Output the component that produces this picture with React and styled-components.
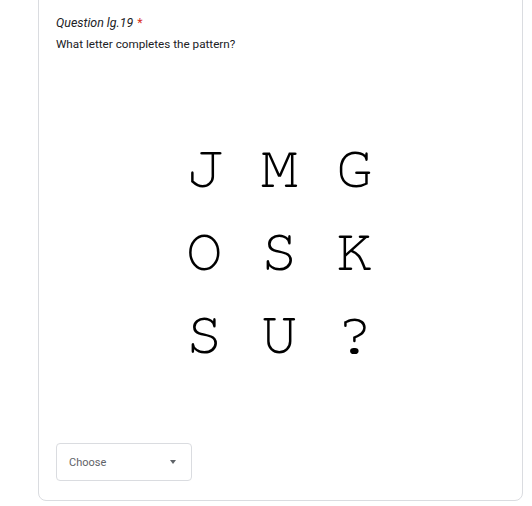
import React from "react";
import styled, { createGlobalStyle } from "styled-components";

const Global = createGlobalStyle`
  html, body { margin: 0; padding: 0; background: #ffffff; }
  body { font-family: Roboto, "Noto Sans", Arial, sans-serif; }
`;

const Page = styled.div`
  width: 532px;
  height: 506px;
  overflow: hidden;
  position: relative;
  box-sizing: border-box;
  padding: 0 9px 0 38px;
`;

const Card = styled.div`
  margin-top: -20px;
  height: 521px;
  box-sizing: border-box;
  border: 1px solid #dadce0;
  border-radius: 8px;
  background: #fff;
  padding: 33px 17px 0 17px;
  display: flex;
  flex-direction: column;
`;

const Title = styled.div`
  font-family: Roboto, Arial, sans-serif;
  font-style: italic;
  font-size: 12.4px;
  line-height: 18px;
  color: #202124;
`;

const Required = styled.span`
  color: #d93025;
  font-style: normal;
  margin-left: 4px;
`;

const Description = styled.div`
  margin-top: 4px;
  font-family: Roboto, Arial, sans-serif;
  font-size: 11.7px;
  line-height: 16px;
  color: #202124;
`;

const Puzzle = styled.div`
  margin: 75px 0 0 -17px;
  width: calc(100% + 34px);
  display: grid;
  grid-template-columns: repeat(3, 75px);
  justify-content: center;
  padding-left: 36px;
  box-sizing: border-box;
`;

const Cell = styled.div`
  font-family: "Nimbus Mono PS", "Nimbus Mono L", FreeMono, "Courier 10 Pitch", Courier, "Liberation Mono", monospace;
  font-size: 61px;
  line-height: 83px;
  height: 83px;
  color: #000;
  text-align: left;
`;

const Select = styled.div`
  margin-top: 67px;
  width: 136px;
  height: 38px;
  box-sizing: border-box;
  border: 1px solid #dadce0;
  border-radius: 4px;
  display: flex;
  align-items: center;
  justify-content: space-between;
  padding: 0 15px 0 12px;
`;

const Placeholder = styled.span`
  font-family: Roboto, Arial, sans-serif;
  font-size: 11px;
  color: #5f6368;
`;

const Caret = styled.span`
  width: 0;
  height: 0;
  border-left: 3.5px solid transparent;
  border-right: 3.5px solid transparent;
  border-top: 4px solid #5f6368;
`;

const rows = [
  ["J", "M", "G"],
  ["O", "S", "K"],
  ["S", "U", "?"],
];

export default function App() {
  return (
    <>
      <Global />
      <Page>
        <Card>
          <Title>
            Question lg.19<Required>*</Required>
          </Title>
          <Description>What letter completes the pattern?</Description>
          <Puzzle>
            {rows.flat().map((l, i) => (
              <Cell key={i}>{l}</Cell>
            ))}
          </Puzzle>
          <Select>
            <Placeholder>Choose</Placeholder>
            <Caret />
          </Select>
        </Card>
      </Page>
    </>
  );
}
